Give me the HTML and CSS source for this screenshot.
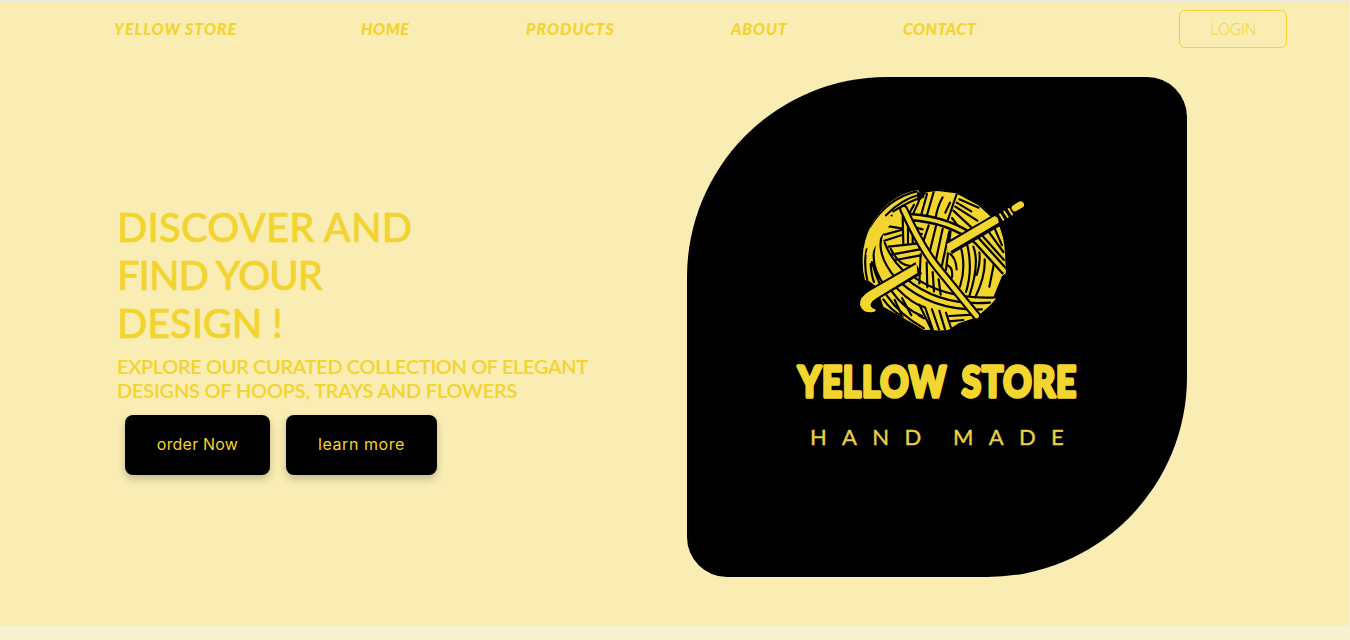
FILE: index.html
```html
<!DOCTYPE html>
<html lang="en">
<head>
<meta charset="utf-8">
<title>Yellow Store</title>
<link rel="stylesheet" href="styles.css">
</head>
<body>
<div class="page">
  <header class="nav">
    <a class="nav-link brand">YELLOW STORE</a>
    <a class="nav-link home">HOME</a>
    <a class="nav-link products">PRODUCTS</a>
    <a class="nav-link about">ABOUT</a>
    <a class="nav-link contact">CONTACT</a>
    <button class="login">LOGIN</button>
  </header>
  <main class="hero">
    <section class="copy">
      <h1 class="title"><span class="t1">DISCOVER AND</span><br><span class="t2">FIND YOUR</span><br><span class="t3">DESIGN !</span></h1>
      <p class="lead"><span class="l1">EXPLORE OUR CURATED COLLECTION OF ELEGANT</span><br><span class="l2">DESIGNS OF HOOPS, TRAYS AND FLOWERS</span></p>
      <div class="actions">
        <button class="cta order"><span>order Now</span></button>
        <button class="cta learn"><span>learn more</span></button>
      </div>
    </section>
    <div class="logo">
      <svg class="logo-art" viewBox="0 0 500 500">
        <svg x="163" y="103" width="185" height="160" viewBox="0 0 555 480">
          <defs>
            <clipPath id="ball"><path d="M204 30L210 42Q236 34 262 33L318 40 385 76 420 108 440 120Q464 170 465 222L468 280 456 288 431 349 438 356 422 374 380 412 326 430 294 450 265 452 240 449 222 450 150 408 100 380 80 320 56 302 45 300Q24 220 62 138Q112 46 204 30Z"/></clipPath>
          </defs>
          <g clip-path="url(#ball)">
            <rect width="555" height="480" fill="#f3d52f"/>
            <g fill="none" stroke="#000" stroke-width="6.500" stroke-linecap="round">
              <path d="M204 40L226 38L206 62Z" fill="#000"/>
              <path d="M200 34Q110 56 60 140M214 42Q150 60 108 106M220 50Q172 66 130 94M206 65L190 100M192 74L180 96"/>
              <path d="M231 42L212 110M251 36L229 112M278 52Q262 80 256 118M300 68L286 98M320 42L288 136"/>
              <path d="M236 136L218 190M258 138L238 220M278 146L256 248M298 154L272 274M212 222L208 310M230 248L232 322M248 276L252 334M266 298L272 344M302 150L288 270"/>
              <path d="M320 68L364 94M328 58L386 83M316 80L382 122M310 92L368 146M306 114L336 154"/>
              <path d="M301 222Q318 236 320 268M291 255Q310 262 306 292M334 208Q348 265 330 320M352 196Q369 270 348 336M370 200Q390 250 358 348M388 218Q392 245 380 285M404 238Q407 286 376 352M432 250L418 320"/>
              <path d="M400 170L462 240M418 158L460 216M434 145L456 196M380 178L462 262"/>
              <path d="M125 107L100 146M104 137L158 146M104 164L154 150M103 182L154 166M158 110L160 190M174 130L174 188M188 150L188 190M116 200L206 190M124 224L210 208M136 240L212 226M194 142L218 148M198 160L216 162"/>
              <path d="M98 160Q74 220 138 296M104 188Q122 236 160 272M122 206Q145 256 182 258M74 200Q60 262 108 322M66 246Q76 285 92 318M50 208Q40 250 52 302M62 252Q64 286 72 306"/>
              <path d="M184 286Q286 360 438 352M168 296Q270 380 420 368M152 308Q250 394 396 388M142 326Q190 374 225 382M126 335Q160 385 216 408M110 346Q150 405 222 445M100 358Q122 390 158 410"/>
              <path d="M208 374L244 448M226 384L248 448M246 388L268 452M268 392L286 452M288 398L303 444M298 408L370 404M296 424L340 420M205 405L222 415M156 354L184 406M134 360L154 402"/>
            </g>
            <g fill="none" stroke-linecap="butt">
              <path d="M180 111Q300 119 382 183L466 276" stroke="#000" stroke-width="25"/>
              <path d="M180 111Q300 119 382 183L466 276" stroke="#f3d52f" stroke-width="11"/>
              <path d="M56 226Q70 176 128 112" stroke="#f3d52f" stroke-width="17"/>
            </g>
          </g>
          <g fill="none" stroke-linecap="round">
            <path d="M296 205L442 120M206 264L66 346" stroke="#000" stroke-width="40" stroke-linecap="butt"/>
            <path d="M291 192L434 108Q446 112 446 128L292 219Z" fill="#f3d52f"/>
            <path d="M200 252L58 334Q28 352 30 374Q36 398 66 397Q80 395 76 388Q60 384 62 372Q66 362 80 354L202 279Z" fill="#f3d52f"/>
            <path d="M450 103L460 119M463 95L473 111M476 87L486 103" stroke="#f3d52f" stroke-width="6"/>
            <path d="M495 84L512 74" stroke="#f3d52f" stroke-width="20"/>
            <path d="M161 88Q213 202 260 260T380 408" stroke="#000" stroke-width="27"/>
            <path d="M161 88Q213 202 260 260T380 408" stroke="#f3d52f" stroke-width="14"/>
          </g>
        </svg>
        <text class="word" x="111" y="320" textLength="279" lengthAdjust="spacingAndGlyphs">YELLOW STORE</text>
        <text class="tag" x="123" y="368">HAND</text>
        <text class="tag" x="266" y="368">MADE</text>
      </svg>
    </div>
  </main>
</div>
</body>
</html>
```
FILE: styles.css
```css
* { box-sizing: border-box; }
body { margin: 0; background: #f7f1cf; overflow: hidden; font-family: Lato, "Open Sans", sans-serif; }
.page { width: 1349px; height: 626px; background: #faedb3; border-top: 1px solid #ece8e8; }
.nav { height: 56px; display: flex; align-items: center; padding: 0 62px 0 114px; color: #f3d32e; }
.nav-link { font: italic 900 16px/20px Lato, sans-serif; white-space: nowrap; flex: none; }
.brand { width: 247px; letter-spacing: 1px; }
.home { width: 165px; letter-spacing: .5px; }
.products { width: 205px; letter-spacing: 1px; }
.about { width: 172px; letter-spacing: .8px; }
.contact { width: 276px; letter-spacing: .4px; }
.login { width: 108px; height: 38px; padding: 0; flex: none; border: 1px solid #f3d32e; border-radius: 6px; background: transparent; color: #f3d32e; font: 300 16px/20px "Open Sans", sans-serif; letter-spacing: -.4px; }
.hero { display: flex; padding: 20px 0 0 117px; }
.copy { width: 570px; padding-top: 126px; }
.title { margin: 0; color: #f3d32e; font: 500 40px/48px Lato, sans-serif; -webkit-text-stroke: .5px #f3d32e; white-space: nowrap; }
.t1 { letter-spacing: .15px; }
.t2 { letter-spacing: -1px; }
.t3 { letter-spacing: -.2px; }
.lead { margin: 7px 0 13px; color: #f3d32e; font: 600 20px/24px Lato, sans-serif; white-space: nowrap; }
.l1 { letter-spacing: -.37px; }
.l2 { letter-spacing: -.2px; }
.actions { display: flex; gap: 16px; padding-left: 8px; }
.cta { height: 60px; padding: 0 0 2px; border: 0; border-radius: 8px; background: #000; color: #f3d32e; font: 400 16px/24px Inter, sans-serif; box-shadow: 0 4px 8px rgba(0, 0, 0, .22); white-space: nowrap; }
.order { width: 145px; letter-spacing: .2px; }
.learn { width: 151px; letter-spacing: .55px; }
.logo { width: 500px; height: 500px; background: #000; border-radius: 200px 40px 200px 40px; overflow: hidden; }
.logo-art { display: block; width: 500px; height: 500px; }
.word { font: 900 42px Lato, sans-serif; word-spacing: 7px; letter-spacing: 1px; fill: #f3d52f; stroke: #f3d52f; stroke-width: 3.5px; stroke-linejoin: round; }
.tag { font: 400 22px Lato, sans-serif; letter-spacing: 15.3px; fill: #e8cf45; stroke: #e8cf45; stroke-width: .4px; }
```
